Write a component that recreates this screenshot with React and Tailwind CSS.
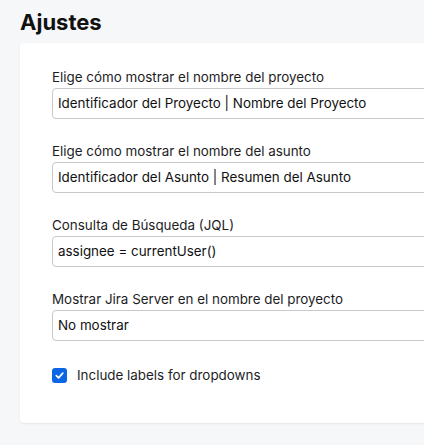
import React from "react";

function Field({ label, value }) {
  return (
    <div className="flex flex-col">
      <label className="text-[13.4px] leading-[18px] text-[#1d1d1f] mb-[2px]">{label}</label>
      <div className="h-[31px] border border-[#c8c8cc] rounded-[4px] flex items-center px-[5px] text-[13.4px] text-[#111]">
        {value}
      </div>
    </div>
  );
}

export default function App() {
  return (
    <div
      className="w-[424px] h-[445px] overflow-hidden bg-[#f6f7f9] pl-[20px]"
      style={{ fontFamily: "Inter, 'Noto Sans', sans-serif" }}
    >
      <h1 className="pt-[8px] text-[22px] leading-[28px] font-bold text-[#111]">Ajustes</h1>
      <div className="mt-[7px] w-[460px] h-[380px] bg-white rounded-[4px] shadow-[0_1px_2px_rgba(0,0,0,0.08)] pl-[32px] pt-[25px] flex flex-col gap-[23px]">
        <Field label="Elige cómo mostrar el nombre del proyecto" value="Identificador del Proyecto | Nombre del Proyecto" />
        <Field label="Elige cómo mostrar el nombre del asunto" value="Identificador del Asunto | Resumen del Asunto" />
        <Field label="Consulta de Búsqueda (JQL)" value="assignee = currentUser()" />
        <Field label="Mostrar Jira Server en el nombre del proyecto" value="No mostrar" />
        <div className="flex items-center gap-[10px] mt-[1px]">
          <div className="w-[15px] h-[15px] rounded-[3px] bg-[#0b66e4] flex items-center justify-center">
            <svg width="11" height="11" viewBox="0 0 12 12" fill="none">
              <path d="M2.5 6.2 L5 8.6 L9.6 3.4" stroke="white" strokeWidth="1.8" strokeLinecap="round" strokeLinejoin="round" />
            </svg>
          </div>
          <span className="text-[13.4px] leading-[20px] text-[#1d1d1f]">Include labels for dropdowns</span>
        </div>
      </div>
    </div>
  );
}
